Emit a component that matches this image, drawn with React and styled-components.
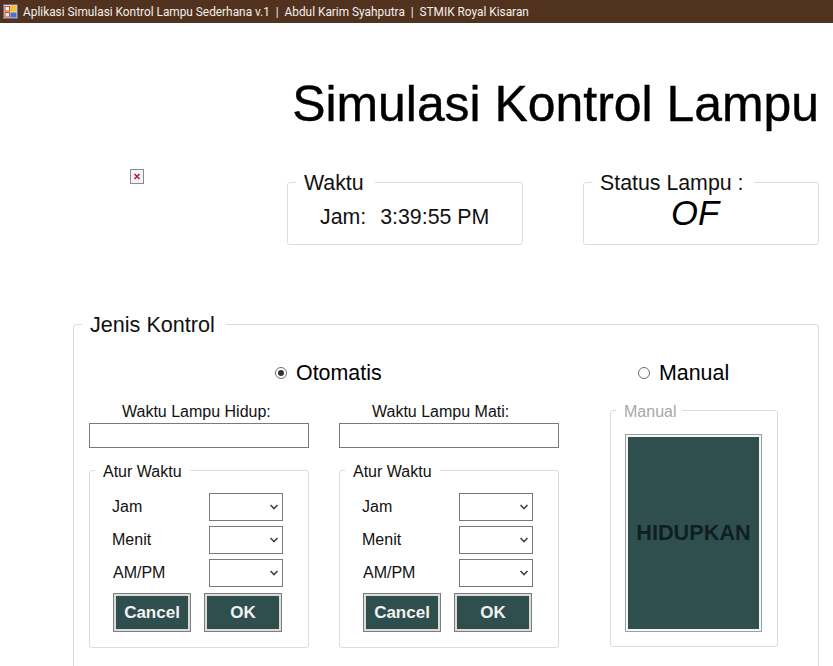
import React from 'react'
import styled, {createGlobalStyle} from 'styled-components'

const GlobalStyle = createGlobalStyle`
    html, body {
        margin: 0;
        padding: 0;
        height: 666px;
        overflow: hidden;
        background: #fff;
    }
    * {
        box-sizing: border-box;
    }
`

const Page = styled.div`
    width: 833px;
    height: 666px;
    overflow: hidden;
    font-family: "Liberation Sans", Arial, sans-serif;
    color: #111;
`

const TitleBar = styled.header`
    height: 23px;
    background: #51321f;
    display: flex;
    align-items: center;
    padding-left: 3px;
    gap: 5px;
    color: #f4efe9;
    font-family: Roboto, sans-serif;
    font-size: 11.85px;
    white-space: nowrap;
`

const Title = styled.h1`
    margin: 0;
    padding: 52px 14px 0 0;
    height: 148px;
    text-align: right;
    font-size: 49.9px;
    line-height: 58px;
    font-weight: 400;
    color: #000;
    -webkit-text-stroke: 0.4px #000;
    white-space: nowrap;
`

const TopRow = styled.div`
    display: grid;
    grid-template-columns: 236px 236px;
    justify-content: end;
    column-gap: 60px;
    padding-right: 14px;
    position: relative;
`

const BrokenImage = styled.svg`
    position: absolute;
    left: 130px;
    top: -2px;
`

const Group = styled.fieldset`
    margin: 0;
    min-width: 0;
    padding: 0;
    height: ${p => p.$height || 'auto'};
    border: 1px solid #dcdcdc;
    border-radius: 3px;
`

const Legend = styled.legend`
    margin-left: ${p => p.$offset || 8}px;
    padding: 0 ${p => p.$gapRight || 11}px 0 ${p => p.$gapLeft || 8}px;
    font-size: ${p => p.$size || 16}px;
    line-height: ${p => p.$size ? 22 : 18}px;
    color: ${p => p.$muted ? '#a8a8a8' : '#111'};
    transform: translateY(${p => p.$size ? 1 : 2}px);
`

const ClockRow = styled.div`
    display: flex;
    padding: 11px 0 0 32px;
    gap: 14px;
    font-size: 21.33px;
    line-height: 26px;
    white-space: nowrap;
`

const StatusValue = styled.div`
    text-align: center;
    font-size: 34.6px;
    line-height: 40px;
    padding-right: 12px;
    font-style: italic;
    color: #000;
`

const KontrolWrap = styled.div`
    padding: 68px 14px 0 73px;
`

const KontrolBody = styled.div`
    display: grid;
    grid-template-columns: 220px 220px 189px;
    column-gap: 30px;
    padding: 24px 0 0 15px;
`

const RadioRow = styled.label`
    grid-column: ${p => p.$col};
    display: flex;
    align-items: center;
    padding-left: ${p => p.$indent}px;
    gap: 9px;
    height: 28px;
    font-size: 21.4px;
    color: #000;
    white-space: nowrap;
`

const RadioDot = styled.span`
    width: 12px;
    height: 12px;
    border-radius: 50%;
    border: 1px solid #6c6c6c;
    background: #fff;
    display: flex;
    align-items: center;
    justify-content: center;
    &::after {
        content: '';
        width: 6px;
        height: 6px;
        border-radius: 50%;
        background: ${p => p.$checked ? '#333' : 'transparent'};
    }
`

const TimeColumn = styled.div`
    display: flex;
    flex-direction: column;
`

const FieldLabel = styled.div`
    height: 18px;
    margin-top: 16px;
    font-size: 16px;
    line-height: 18px;
    padding-left: 33px;
    white-space: nowrap;
`

const TextBox = styled.div`
    height: 25px;
    margin-top: 2px;
    border: 1px solid #7a7a7a;
    background: #fff;
`

const AturGroup = styled(Group)`
    margin-top: 13px;
    height: 187px;
`

const AturBody = styled.div`
    padding: 14px 25px 0 22px;
`

const FieldRow = styled.div`
    display: flex;
    align-items: center;
    justify-content: space-between;
    height: 28px;
    margin-bottom: 5px;
    font-size: 16px;
`

const FieldName = styled.span`
    padding-left: ${p => p.$indent || 0}px;
`

const Select = styled.div`
    width: 74px;
    height: 28px;
    border: 1px solid #7a7a7a;
    background: #fff;
    display: flex;
    align-items: center;
    justify-content: flex-end;
    padding-right: 3px;
`

const ButtonRow = styled.div`
    display: flex;
    gap: 13px;
    margin: 6px 0 0 1px;
`

const ActionButton = styled.button`
    width: 78px;
    height: 39px;
    padding: 0;
    border: 1px solid #7d7d7d;
    outline: 2px solid #dcdcdc;
    outline-offset: -3px;
    background: #2f4f4f;
    color: #f2f2f2;
    font-family: inherit;
    font-size: 17px;
    font-weight: 700;
`

const ManualColumn = styled.div`
    grid-column: 3;
    margin: 14px 0 0 21px;
`

const ManualGroup = styled(Group)`
    height: 246px;
`

const ManualBody = styled.div`
    padding: 15px 0 0 14px;
`

const BigButton = styled.button`
    display: block;
    width: 137px;
    height: 198px;
    padding: 0;
    border: 1px solid #98a0a4;
    outline: 2px solid #f6f6f6;
    outline-offset: -3px;
    background: #2f4f4f;
    color: #0f1f1f;
    font-family: inherit;
    font-size: 21.7px;
    font-weight: 700;
`

const Chevron = () => (
    <svg width="10" height="8" viewBox="0 0 10 8">
        <path d="M1.5 2 L5 5.5 L8.5 2" fill="none" stroke="#444" strokeWidth="1.6" />
    </svg>
)

const AppIcon = () => (
    <svg width="15" height="15" viewBox="0 0 15 15">
        <rect x="0.5" y="0.5" width="14" height="14" fill="#d8dde6" stroke="#6a6f80" />
        <rect x="2" y="2.5" width="4.5" height="4.5" fill="#fff" stroke="#d9452e" />
        <rect x="7" y="1.5" width="6.5" height="6" fill="#f2c230" />
        <rect x="2" y="8.5" width="4.5" height="4.5" fill="#f3e3d0" stroke="#c9503a" />
        <rect x="7.5" y="8.5" width="6" height="5" fill="#4a6fc4" />
    </svg>
)

const TimePanel = ({label}) => (
    <TimeColumn>
        <FieldLabel>{label}</FieldLabel>
        <TextBox />
        <AturGroup>
            <Legend $offset={5} $gapLeft={8} $gapRight={8}>Atur Waktu</Legend>
            <AturBody>
                <FieldRow><FieldName>Jam</FieldName><Select><Chevron /></Select></FieldRow>
                <FieldRow><FieldName>Menit</FieldName><Select><Chevron /></Select></FieldRow>
                <FieldRow><FieldName $indent={1}>AM/PM</FieldName><Select><Chevron /></Select></FieldRow>
                <ButtonRow>
                    <ActionButton>Cancel</ActionButton>
                    <ActionButton>OK</ActionButton>
                </ButtonRow>
            </AturBody>
        </AturGroup>
    </TimeColumn>
)

const App = () => {
    return (
        <Page>
            <GlobalStyle />
            <TitleBar>
                <AppIcon />
                Aplikasi Simulasi Kontrol Lampu Sederhana v.1 &nbsp;|&nbsp; Abdul Karim Syahputra &nbsp;|&nbsp; STMIK Royal Kisaran
            </TitleBar>
            <Title>Simulasi Kontrol Lampu</Title>
            <TopRow>
                <BrokenImage width="14" height="15" viewBox="0 0 14 15">
                    <rect x="0.5" y="0.5" width="13" height="14" fill="#f4f4f4" stroke="#8a8a8a" />
                    <path d="M4.5 5 L9.5 10 M9.5 5 L4.5 10" stroke="#b0233a" strokeWidth="1.6" />
                </BrokenImage>
                <Group $height="74px">
                    <Legend $size={21.33}>Waktu</Legend>
                    <ClockRow><span>Jam:</span><span>3:39:55 PM</span></ClockRow>
                </Group>
                <Group $height="74px">
                    <Legend $size={21.33}>Status Lampu :</Legend>
                    <StatusValue>OF</StatusValue>
                </Group>
            </TopRow>
            <KontrolWrap>
                <Group $height="400px">
                    <Legend $size={21.6}>Jenis Kontrol</Legend>
                    <KontrolBody>
                        <RadioRow $col="1 / 3" $indent={186}><RadioDot $checked />Otomatis</RadioRow>
                        <RadioRow $col="3" $indent={49}><RadioDot />Manual</RadioRow>
                        <TimePanel label="Waktu Lampu Hidup:" />
                        <TimePanel label="Waktu Lampu Mati:" />
                        <ManualColumn>
                            <ManualGroup>
                                <Legend $offset={5} $gapLeft={8} $gapRight={6} $muted>Manual</Legend>
                                <ManualBody>
                                    <BigButton>HIDUPKAN</BigButton>
                                </ManualBody>
                            </ManualGroup>
                        </ManualColumn>
                    </KontrolBody>
                </Group>
            </KontrolWrap>
        </Page>
    )
}

export default App
